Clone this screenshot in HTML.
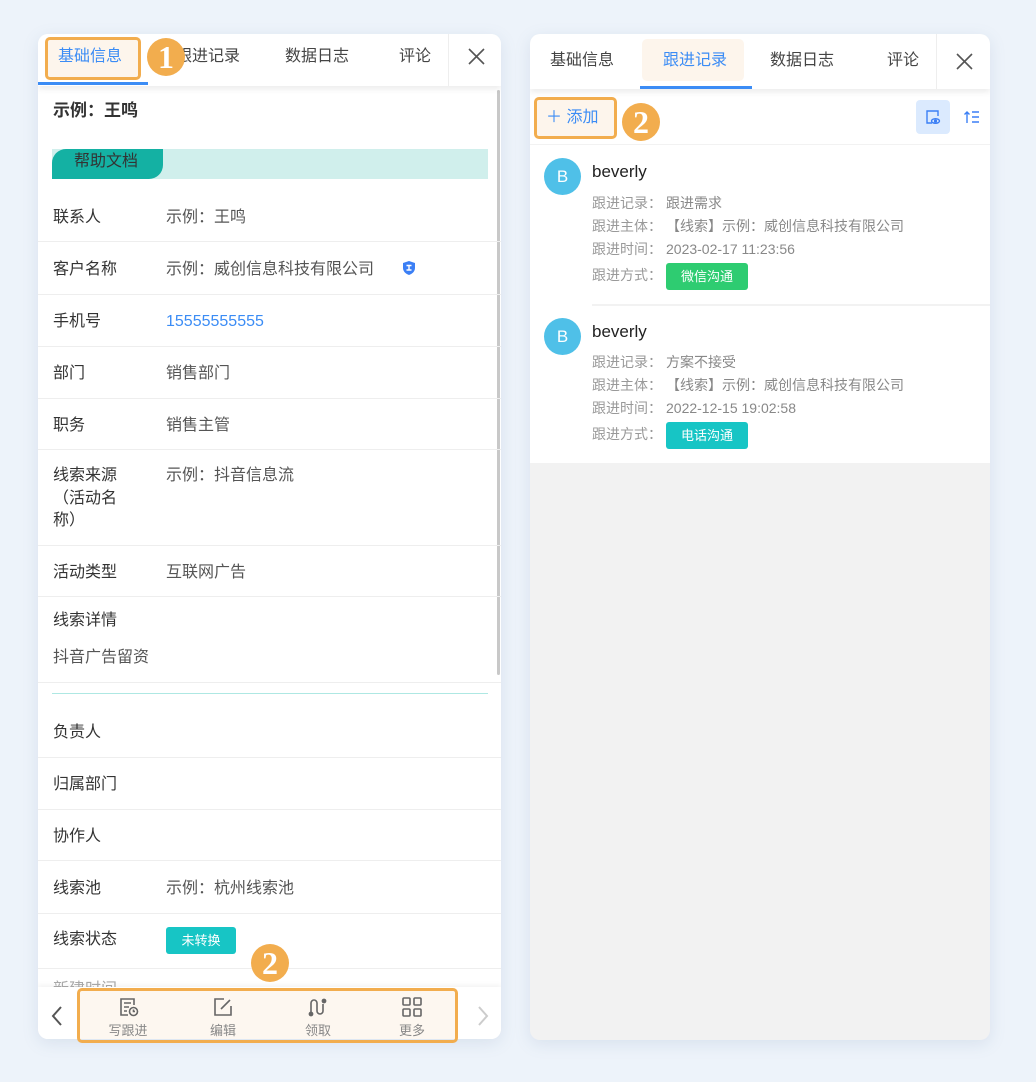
<!DOCTYPE html>
<html><head><meta charset="utf-8"><style>
*{box-sizing:border-box;margin:0;padding:0}
body{width:1036px;height:1082px;background:#edf3fa;font-family:"Liberation Sans","Noto Sans CJK SC",sans-serif;position:relative;overflow:hidden;color:#333}
.p{position:absolute;background:#fff;border-radius:10px;overflow:hidden;box-shadow:0 4px 16px rgba(100,130,170,.15)}
.a{position:absolute;white-space:nowrap}
.lb{font-size:16px;color:#333;line-height:22px}
.v{font-size:16px;color:#555;line-height:22px}
.hr{position:absolute;left:0;right:0;height:1px;background:#eee}
.tab{font-size:16px;color:#444;line-height:22px}
.ob{position:absolute;border:3px solid #f2ad4e;border-radius:5px}
.num{position:absolute;width:38px;height:38px;border-radius:50%;background:#f2ad4e;color:#fff;font-family:"Liberation Serif",serif;font-weight:bold;font-size:32px;line-height:38px;text-align:center}
.gl{font-size:14px;color:#999;line-height:20px}
.gl b{display:inline-block;width:74px;font-weight:normal}
.gv{color:#888}
.tag{display:inline-block;color:#fff;font-size:13px;width:82px;text-align:center;height:27px;line-height:27px;border-radius:3px;vertical-align:middle}
.av{position:absolute;width:37px;height:37px;border-radius:50%;background:#4fc0e8;color:#fff;font-size:17px;line-height:37px;text-align:center}
.bi{position:absolute;text-align:center;font-size:13px;color:#888;width:70px}
</style></head><body>

<!-- LEFT PANEL -->
<div class="p" style="left:38px;top:34px;width:463px;height:1005px">
  <div style="position:absolute;left:0;top:0;right:0;height:52px;box-shadow:0 3px 6px rgba(0,0,0,.08);background:#fff;z-index:2">
    <div style="position:absolute;left:7px;top:3px;width:96px;height:43px;background:#fdf5ec;border-radius:5px"></div>
    <div class="a tab" style="left:20px;top:12px;color:#3b8cf5">基础信息</div>
    <div class="a tab" style="left:138px;top:12px">跟进记录</div>
    <div class="a tab" style="left:247px;top:12px">数据日志</div>
    <div class="a tab" style="left:361px;top:12px">评论</div>
    <div style="position:absolute;left:410px;top:0;width:1px;height:52px;background:#eee"></div>
    <svg class="a" style="left:430px;top:14px" width="17" height="17" viewBox="0 0 17 17" stroke="#555" stroke-width="1.6"><path d="M1 1L16 16M16 1L1 16"/></svg>
    <div style="position:absolute;left:0;top:48px;width:110px;height:3px;background:#3b8cf5"></div>
  </div>
  <div class="ob" style="left:7px;top:3px;width:96px;height:43px;z-index:3"></div>
  <div class="num" style="left:109px;top:4px;z-index:3">1</div>
  <div style="position:absolute;left:459px;top:56px;width:3px;height:585px;background:#c8c8c8;border-radius:2px"></div>

  <div class="a lb" style="left:15px;top:66px;font-weight:bold;font-size:17px">示例：王鸣</div>
  <div style="position:absolute;left:14px;top:115px;width:436px;height:30px;background:#d0efec"></div>
  <div style="position:absolute;left:14px;top:115px;width:111px;height:30px;background:#14b1a3;border-radius:14px 0 14px 0"></div>
  <div class="a" style="left:36px;top:117px;font-size:16px;color:#333;line-height:22px">帮助文档</div>

  <div class="a lb" style="left:15px;top:173px">联系人</div><div class="a v" style="left:128px;top:173px">示例：王鸣</div>
  <div class="hr" style="top:207px"></div>
  <div class="a lb" style="left:15px;top:225px">客户名称</div><div class="a v" style="left:128px;top:225px">示例：威创信息科技有限公司</div>
  <svg class="a" style="left:364px;top:226px" width="14" height="16" viewBox="0 0 14 16"><path d="M7 1L13 3V8C13 11.5 10 14 7 15C4 14 1 11.5 1 8V3Z" fill="#3b7ff5"/><path d="M4.5 5.5H9.5M7 5.5V10M4.5 10H9.5" stroke="#fff" stroke-width="1.4"/></svg>
  <div class="hr" style="top:260px"></div>
  <div class="a lb" style="left:15px;top:277px">手机号</div><div class="a v" style="left:128px;top:277px;color:#3b8cf5">15555555555</div>
  <div class="hr" style="top:312px"></div>
  <div class="a lb" style="left:15px;top:329px">部门</div><div class="a v" style="left:128px;top:329px">销售部门</div>
  <div class="hr" style="top:364px"></div>
  <div class="a lb" style="left:15px;top:381px">职务</div><div class="a v" style="left:128px;top:381px">销售主管</div>
  <div class="hr" style="top:415px"></div>
  <div class="a lb" style="left:15px;top:431px;line-height:22.5px">线索来源<br>（活动名<br>称）</div><div class="a v" style="left:128px;top:431px">示例：抖音信息流</div>
  <div class="hr" style="top:511px"></div>
  <div class="a lb" style="left:15px;top:528px">活动类型</div><div class="a v" style="left:128px;top:528px">互联网广告</div>
  <div class="hr" style="top:562px"></div>
  <div class="a lb" style="left:15px;top:576px">线索详情</div>
  <div class="a v" style="left:15px;top:613px">抖音广告留资</div>
  <div class="hr" style="top:648px"></div>
  <div style="position:absolute;left:14px;top:659px;width:436px;height:1px;background:#aee8e3"></div>
  <div class="a lb" style="left:15px;top:688px">负责人</div>
  <div class="hr" style="top:723px"></div>
  <div class="a lb" style="left:15px;top:740px">归属部门</div>
  <div class="hr" style="top:775px"></div>
  <div class="a lb" style="left:15px;top:792px">协作人</div>
  <div class="hr" style="top:826px"></div>
  <div class="a lb" style="left:15px;top:844px">线索池</div><div class="a v" style="left:128px;top:844px">示例：杭州线索池</div>
  <div class="hr" style="top:879px"></div>
  <div class="a lb" style="left:15px;top:895px">线索状态</div>
  <div class="a" style="left:128px;top:893px;width:70px;height:27px;background:#17c5c5;border-radius:3px;color:#fff;font-size:13px;line-height:27px;text-align:center">未转换</div>
  <div class="hr" style="top:934px"></div>
  <div class="a lb" style="left:15px;top:945px;color:#aaa;height:8px;overflow:hidden">新建时间</div>

  <div style="position:absolute;left:0;top:953px;right:0;height:52px;background:#fff;box-shadow:0 -2px 5px rgba(0,0,0,.05)"></div>
  <svg class="a" style="left:13px;top:971px" width="12" height="22" viewBox="0 0 12 22" fill="none" stroke="#555" stroke-width="2"><path d="M10 2L2 11L10 20"/></svg>
  <svg class="a" style="left:439px;top:971px" width="12" height="22" viewBox="0 0 12 22" fill="none" stroke="#ccc" stroke-width="2"><path d="M2 2L10 11L2 20"/></svg>
  <div style="position:absolute;left:42px;top:957px;width:375px;height:49px;background:#fdf7f0"></div>
  <svg class="a" style="left:80px;top:962px" width="22" height="22" viewBox="0 0 22 22" fill="none" stroke="#666" stroke-width="1.6"><path d="M16 9V3H3V19H10"/><path d="M6 7H13M6 11H11M6 15H9"/><circle cx="15.5" cy="15.5" r="4"/><path d="M15.5 13.5V15.5H17"/></svg>
  <svg class="a" style="left:174px;top:962px" width="22" height="22" viewBox="0 0 22 22" fill="none" stroke="#666" stroke-width="1.6"><path d="M12 3H3V19H19V10"/><path d="M9 13L18 4"/></svg>
  <svg class="a" style="left:269px;top:962px" width="22" height="22" viewBox="0 0 22 22" fill="none" stroke="#666" stroke-width="1.6"><path d="M4 17V7A3 3 0 0 1 10 7V15A3 3 0 0 0 16 15V8"/><circle cx="4" cy="18" r="1.6" fill="#666"/><circle cx="17" cy="5" r="1.6" fill="#666"/></svg>
  <svg class="a" style="left:363px;top:962px" width="22" height="22" viewBox="0 0 22 22" fill="none" stroke="#666" stroke-width="1.6"><rect x="2" y="2" width="7" height="7" rx="1"/><rect x="13" y="2" width="7" height="7" rx="1"/><rect x="2" y="13" width="7" height="7" rx="1"/><rect x="13" y="13" width="7" height="7" rx="1"/></svg>
  <div class="bi" style="left:55px;top:986px">写跟进</div>
  <div class="bi" style="left:150px;top:986px">编辑</div>
  <div class="bi" style="left:245px;top:986px">领取</div>
  <div class="bi" style="left:339px;top:986px">更多</div>
</div>
<div class="ob" style="left:77px;top:988px;width:381px;height:55px"></div>
<div class="num" style="left:251px;top:944px">2</div>

<!-- RIGHT PANEL -->
<div class="p" style="left:530px;top:34px;width:460px;height:1006px;background:#f2f2f2">
  <div style="position:absolute;left:0;top:0;right:0;height:55px;background:#fff;box-shadow:0 3px 6px rgba(0,0,0,.08);z-index:2">
    <div style="position:absolute;left:112px;top:5px;width:102px;height:42px;background:#fdf5ec;border-radius:5px"></div>
    <div class="a tab" style="left:20px;top:16px">基础信息</div>
    <div class="a tab" style="left:133px;top:16px;color:#3b8cf5">跟进记录</div>
    <div class="a tab" style="left:240px;top:16px">数据日志</div>
    <div class="a tab" style="left:357px;top:16px">评论</div>
    <div style="position:absolute;left:406px;top:0;width:1px;height:55px;background:#eee"></div>
    <svg class="a" style="left:426px;top:19px" width="17" height="17" viewBox="0 0 17 17" stroke="#555" stroke-width="1.6"><path d="M1 1L16 16M16 1L1 16"/></svg>
    <div style="position:absolute;left:110px;top:52px;width:112px;height:3px;background:#3b8cf5"></div>
  </div>
  <div style="position:absolute;left:0;top:55px;right:0;height:55px;background:#fff"></div>
  <div style="position:absolute;left:4px;top:63px;width:83px;height:42px;background:#fdf5ec;border-radius:5px"></div>
  <div class="a" style="left:16px;top:73px;font-size:16px;color:#3b8cf5;line-height:22px">＋ 添加</div>
  <div style="position:absolute;left:386px;top:66px;width:34px;height:34px;background:#dbeafe;border-radius:4px"></div>
  <svg class="a" style="left:395px;top:75px" width="16" height="16" viewBox="0 0 16 16" fill="none" stroke="#3b7ff5" stroke-width="1.4"><path d="M13 7V2H2V14H7"/><ellipse cx="10.5" cy="12" rx="4" ry="2.3"/><circle cx="10.5" cy="12" r=".9" fill="#3b7ff5"/></svg>
  <svg class="a" style="left:434px;top:76px" width="16" height="14" viewBox="0 0 16 14" fill="none" stroke="#3b7ff5" stroke-width="1.4"><path d="M3 13V2M0.5 4.5L3 2L5.5 4.5M8 2H15M8 7H15M8 12H15"/></svg>
  <div style="position:absolute;left:0;top:111px;right:0;height:318px;background:#fff"></div>
  <div style="position:absolute;left:62px;top:270px;right:0;height:2px;background:#f2f2f2"></div>

  <div class="av" style="left:14px;top:124px">B</div>
  <div class="a" style="left:62px;top:128px;font-size:17px;color:#222">beverly</div>
  <div class="a gl" style="left:62px;top:159px"><b>跟进记录：</b><span class="gv">跟进需求</span></div>
  <div class="a gl" style="left:62px;top:182px"><b>跟进主体：</b><span class="gv">【线索】示例：威创信息科技有限公司</span></div>
  <div class="a gl" style="left:62px;top:205px"><b>跟进时间：</b><span class="gv">2023-02-17 11:23:56</span></div>
  <div class="a gl" style="left:62px;top:229px"><b>跟进方式：</b><span class="tag" style="background:#2ecc71">微信沟通</span></div>

  <div class="av" style="left:14px;top:284px">B</div>
  <div class="a" style="left:62px;top:288px;font-size:17px;color:#222">beverly</div>
  <div class="a gl" style="left:62px;top:318px"><b>跟进记录：</b><span class="gv">方案不接受</span></div>
  <div class="a gl" style="left:62px;top:341px"><b>跟进主体：</b><span class="gv">【线索】示例：威创信息科技有限公司</span></div>
  <div class="a gl" style="left:62px;top:364px"><b>跟进时间：</b><span class="gv">2022-12-15 19:02:58</span></div>
  <div class="a gl" style="left:62px;top:388px"><b>跟进方式：</b><span class="tag" style="background:#17c5c5">电话沟通</span></div>
</div>
<div class="ob" style="left:642px;top:39px;width:102px;height:42px"></div>
<div class="num" style="left:747px;top:41px">1</div>
<div class="ob" style="left:534px;top:97px;width:83px;height:42px"></div>
<div class="num" style="left:622px;top:103px">2</div>

</body></html>
